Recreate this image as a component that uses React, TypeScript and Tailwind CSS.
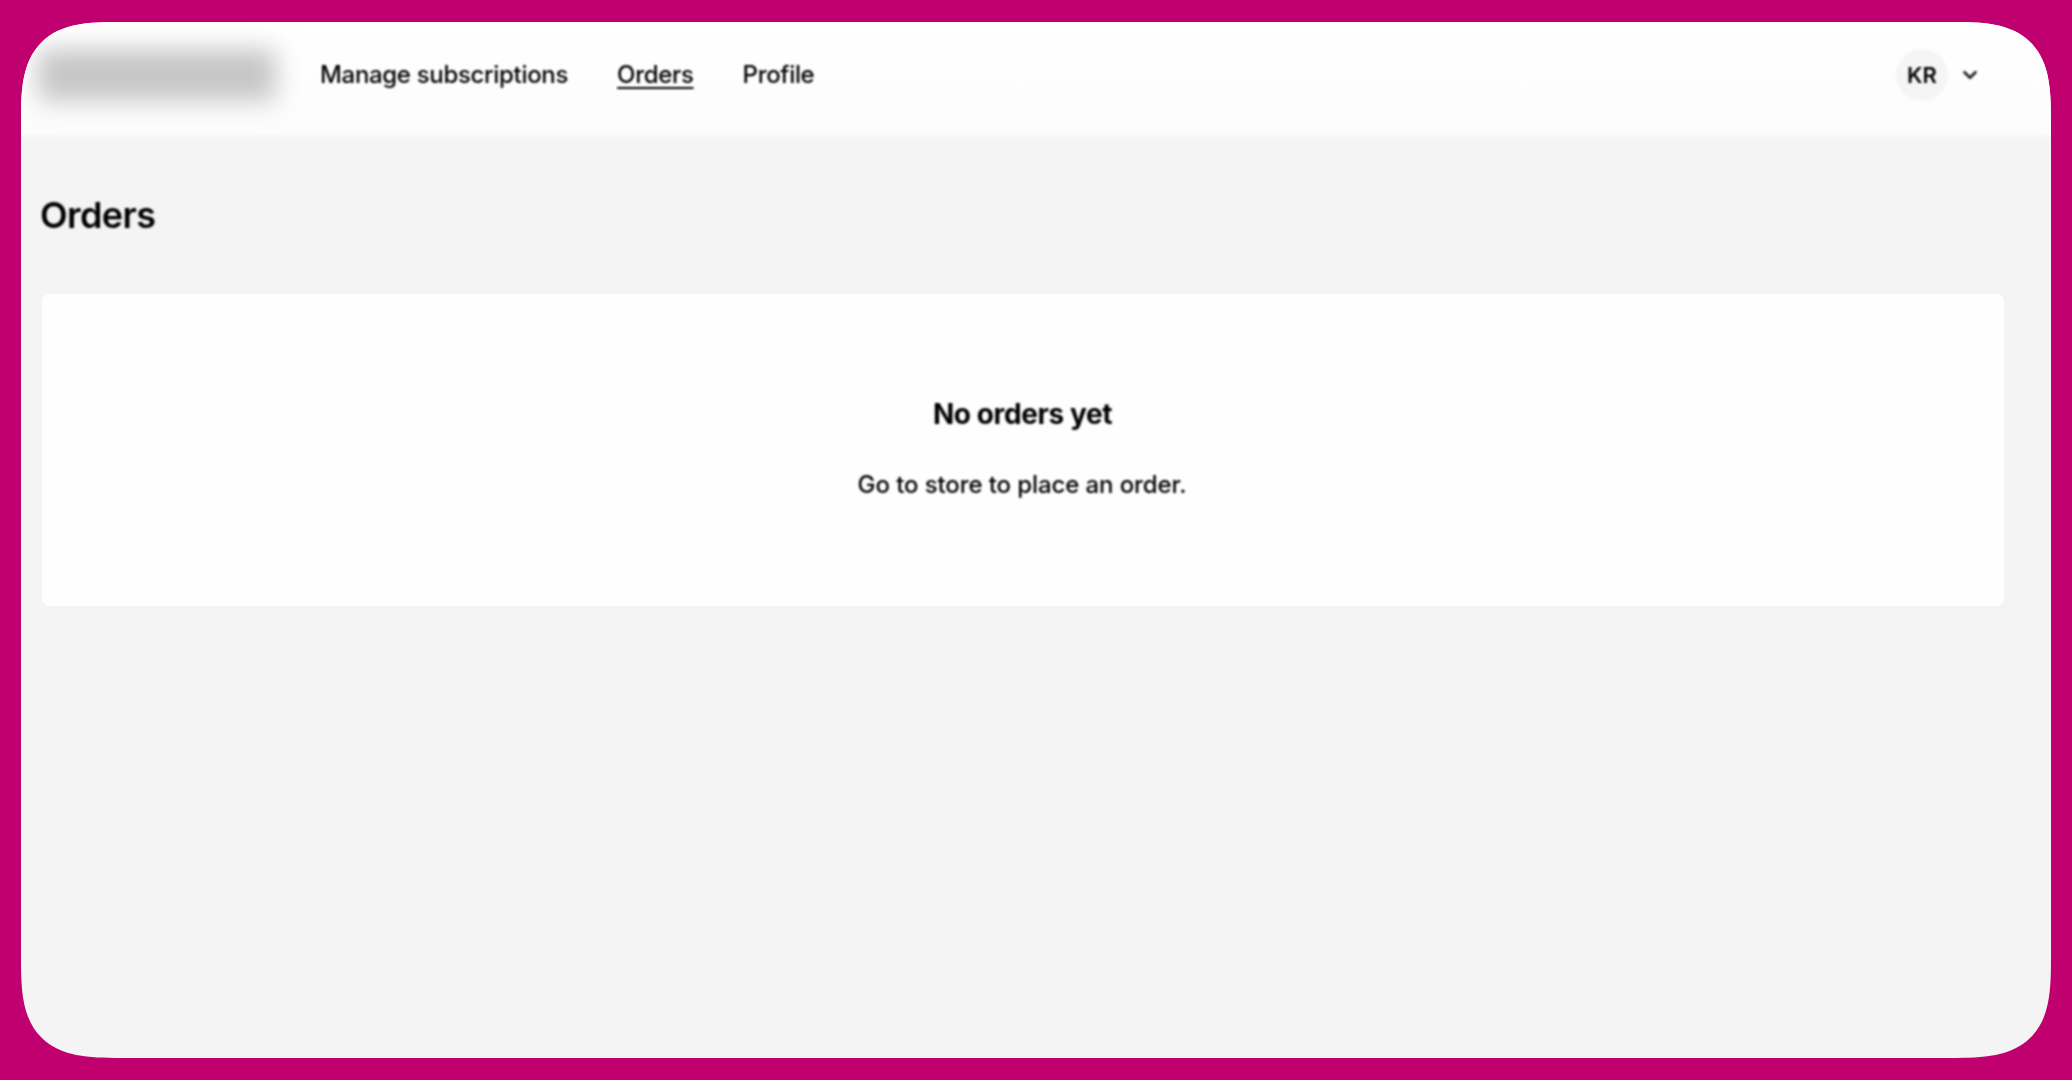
import { ChevronDown } from "lucide-react"

const font = "font-['Inter','Liberation_Sans',sans-serif]"

export default function App() {
  return (
    <div className={`h-[1080px] w-[2072px] overflow-hidden bg-[#c1006f] pl-[21px] pr-[21px] pt-[22px] pb-[22px] ${font}`}>
      <div className="flex h-full flex-col overflow-hidden rounded-[100px] bg-[#f4f4f5] [corner-shape:superellipse(1.6)]">
        {/* Header */}
        <header className="flex h-[113px] shrink-0 items-start bg-gradient-to-b from-white to-[#fcfcfc] pl-[17px] pr-[70px] shadow-[0_3px_6px_#f9f9f9]">
          <div className="mt-[27px] h-[52px] w-[238px] rounded-md bg-[#c6c6c6] blur-[12px]" />
          <nav className="mt-[36px] ml-[44px] flex gap-[49px] text-[24px] font-[450] leading-[34px] tracking-[-0.32px] text-black blur-[0.8px]">
            <span>Manage subscriptions</span>
            <span className="underline underline-offset-[4px]">Orders</span>
            <span>Profile</span>
          </nav>
          <div className="ml-auto mt-[27px] flex items-center gap-[11px]">
            <div className="flex h-[52px] w-[52px] items-center justify-center rounded-full bg-[#f5f5f5] text-[22px] font-semibold text-black blur-[0.8px]">
              KR
            </div>
            <ChevronDown className="h-[22px] w-[22px] text-[#222] blur-[0.8px]" strokeWidth={3} />
          </div>
        </header>

        <main className="flex flex-col px-[20px]">
          <h1 className="mt-[57px] -ml-px text-[36px] font-semibold leading-[46px] tracking-[-0.6px] text-black blur-[0.8px]">Orders</h1>
          <section className="mt-[56px] mr-[27px] ml-[1px] flex h-[312px] flex-col items-center rounded-[8px] bg-[#fefefe] pt-[102px]">
            <h2 className="-ml-[1px] text-[28px] font-bold leading-[36px] tracking-[-0.4px] text-black blur-[0.8px]">No orders yet</h2>
            <p className="mt-[35px] -ml-[2px] text-[24px] font-[450] leading-[36px] tracking-[-0.1px] text-black blur-[0.8px]">Go to store to place an order.</p>
          </section>
        </main>
      </div>
    </div>
  )
}
